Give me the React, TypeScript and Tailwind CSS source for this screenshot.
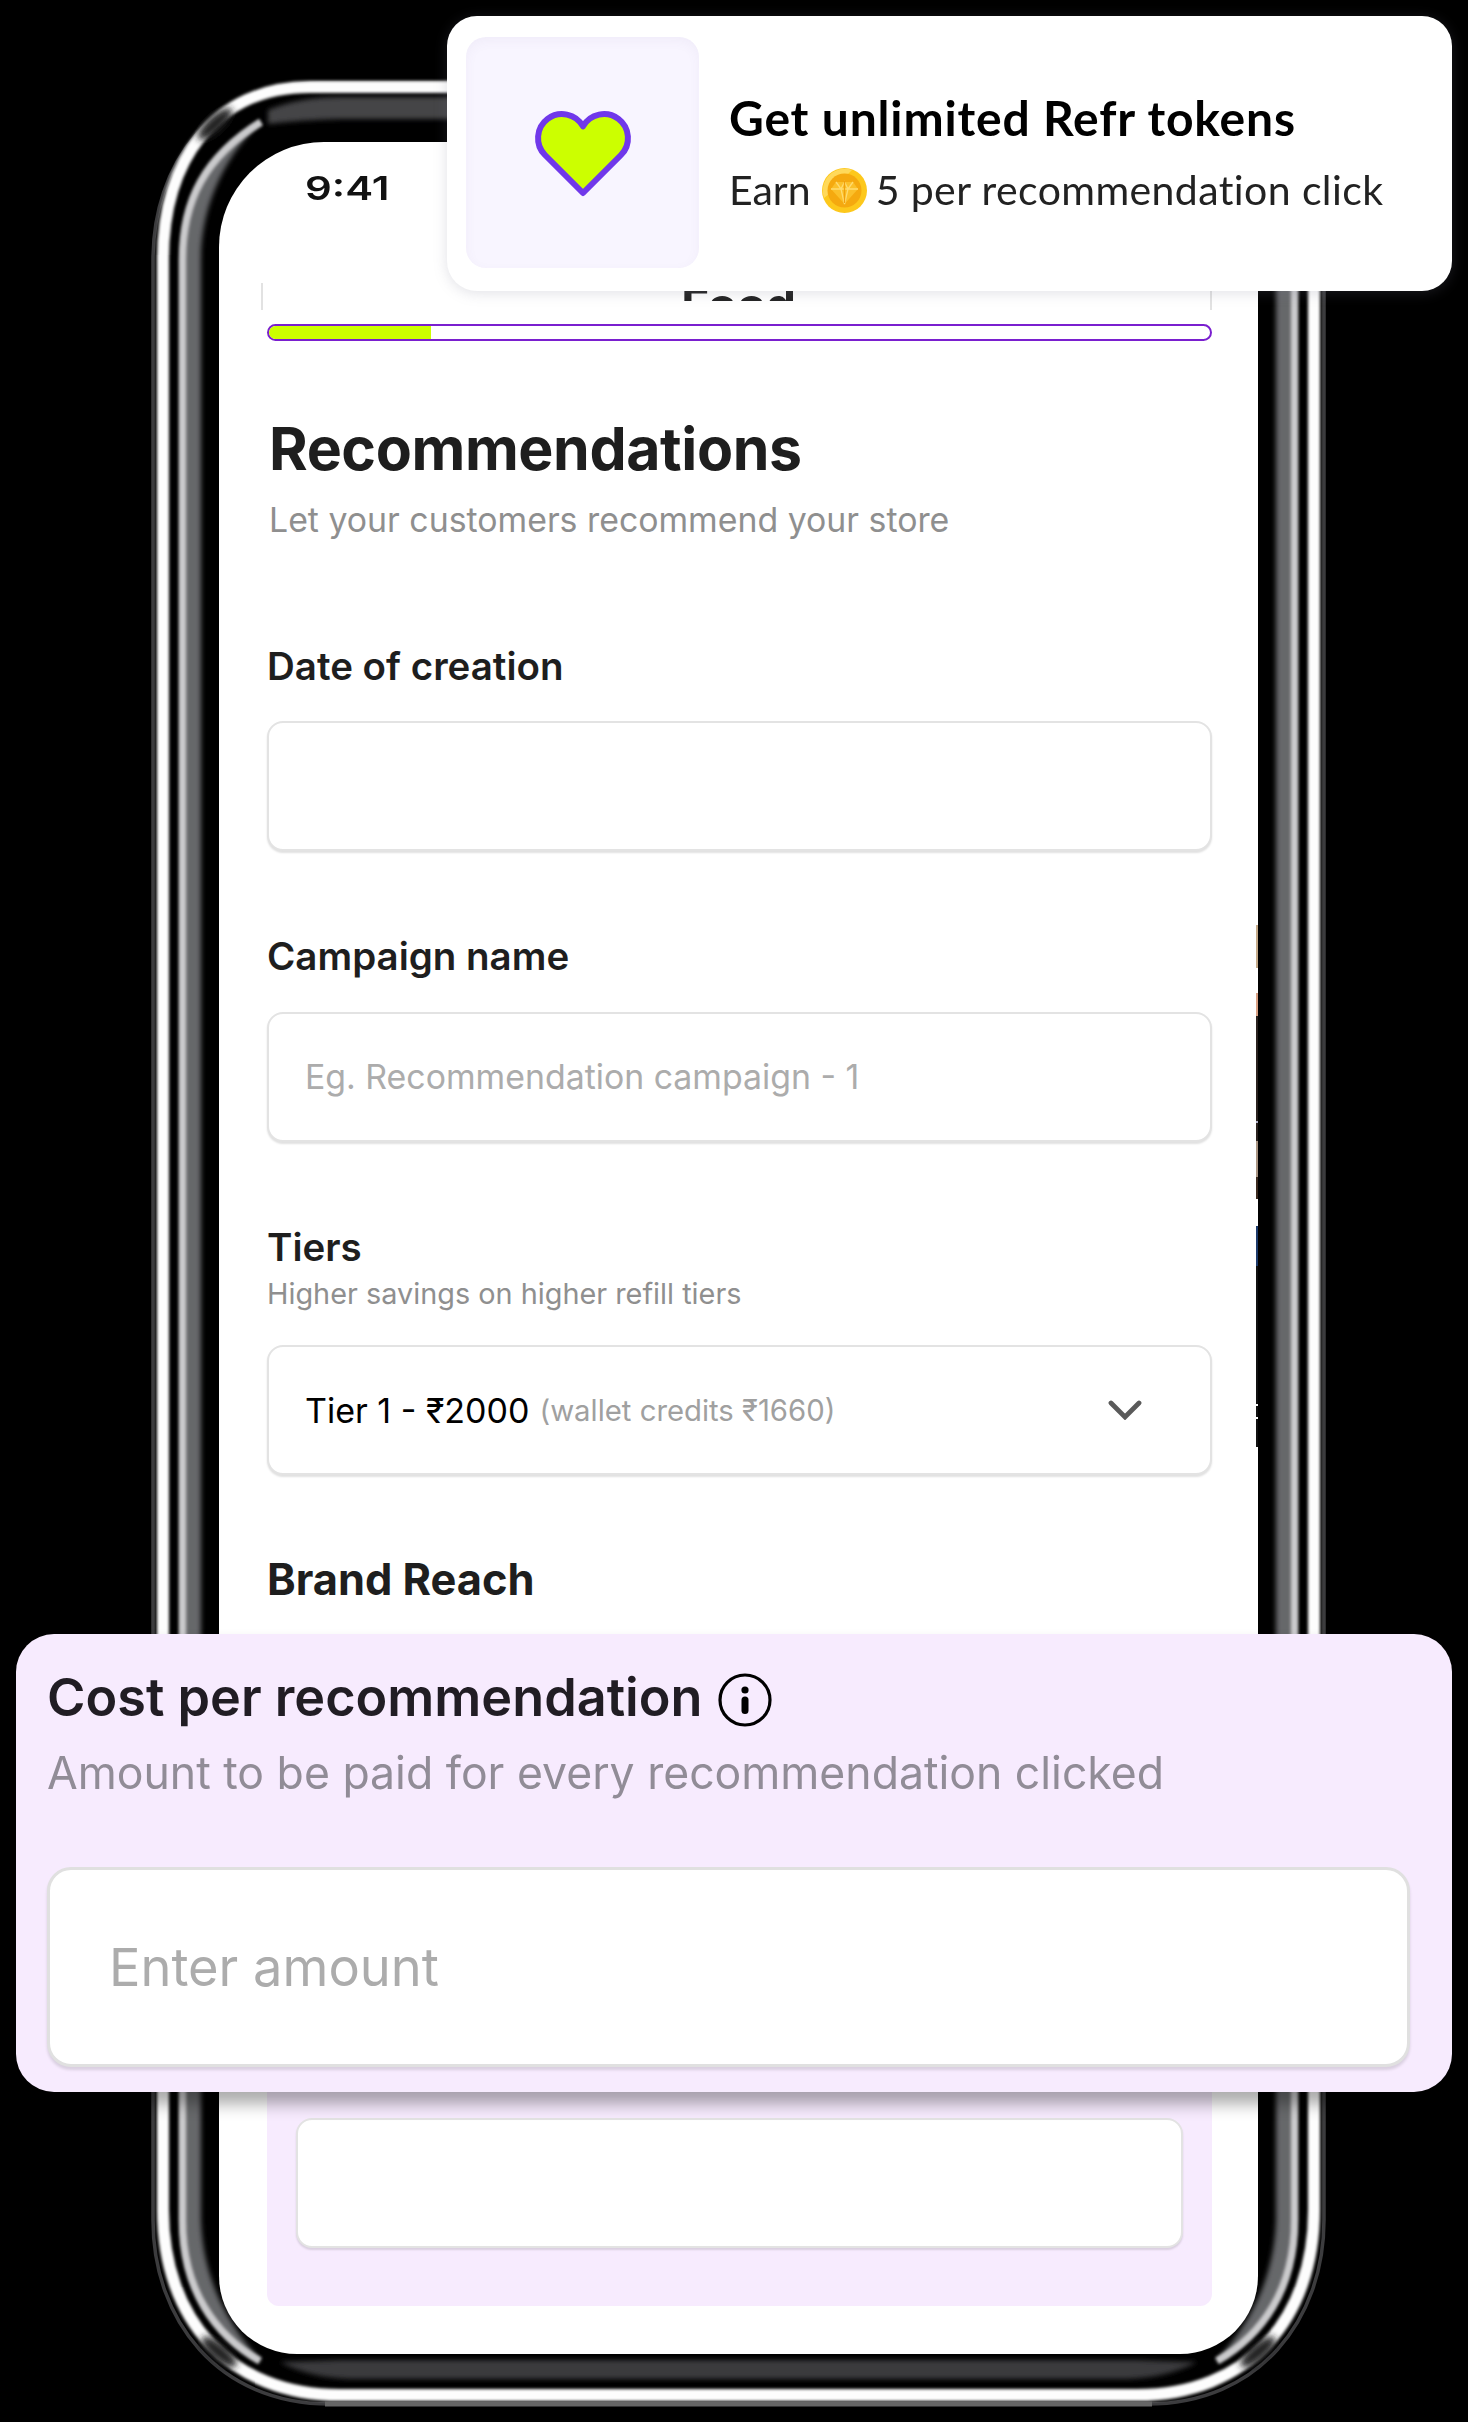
import React from "react";

const INTER = "font-['Inter','Noto_Sans',sans-serif]";

function SideHighlights() {
  return (
    <g>
      <g filter="url(#soft4)">
        <ellipse cx="215" cy="124" rx="22" ry="8" transform="rotate(-42 215 124)" fill="#202022" />
        <ellipse cx="219" cy="2352" rx="22" ry="8" transform="rotate(40 219 2352)" fill="#202022" />
      </g>
      <g filter="url(#soft2)">
        <path d="M182 260 C182 200 205 155 262 121 C230 150 201 200 201 260 V2220 C203 2280 228 2325 262 2362 C215 2335 182 2290 182 2220 Z" fill="#66686a" />
      </g>
      <path d="M261 122 C205 157 182.500 200 182.500 260 V2220 C182.500 2290 215 2335 260 2361" fill="none" stroke="#cacacc" strokeWidth="7.500" filter="url(#soft1)" />
    </g>
  );
}

function PhoneFrame() {
  return (
    <svg className="absolute inset-0" width="1468" height="2422" viewBox="0 0 1468 2422" aria-hidden="true">
      <defs>
        <filter id="soft1" filterUnits="userSpaceOnUse" x="0" y="0" width="1468" height="2422"><feGaussianBlur stdDeviation="1.4" /></filter>
        <filter id="soft2" filterUnits="userSpaceOnUse" x="0" y="0" width="1468" height="2422"><feGaussianBlur stdDeviation="2.4" /></filter>
        <filter id="soft4" filterUnits="userSpaceOnUse" x="0" y="0" width="1468" height="2422"><feGaussianBlur stdDeviation="3.5" /></filter>
      </defs>
      <path d="M320 83 C210 83 153 165 153 260 V2220 C153 2320 218 2404 330 2404 H1147 C1259 2404 1324 2320 1324 2220 V260 C1324 165 1267 83 1157 83 Z" fill="none" stroke="#3c3c3e" strokeWidth="3.500" />
      <path d="M310 87 C215 87 163 160 163 260 V2210 C163 2320 230 2395 340 2395 H1137 C1247 2395 1314 2320 1314 2210 V260 C1314 160 1262 87 1167 87 Z" fill="none" stroke="#fdfdfd" strokeWidth="12" filter="url(#soft1)" />
      <path d="M325 2404 H1152" stroke="#666" strokeWidth="5" />
      <SideHighlights />
      <g transform="translate(1477 0) scale(-1 1)">
        <SideHighlights />
      </g>
      <path d="M268 110 Q300 97 340 97 H1137 Q1177 97 1209 110 V124 Q1177 120 1137 119 H340 Q300 120 268 124 Z" fill="#444446" filter="url(#soft2)" />
      <path d="M280 2362 Q310 2378 350 2379 H1127 Q1167 2378 1197 2362 L1137 2360 H340 Z" fill="#3a3a3c" filter="url(#soft2)" />
    </svg>
  );
}

function Field({ children, className = "" }: { children?: React.ReactNode; className?: string }) {
  return (
    <div className={`flex h-[130px] items-center rounded-[16px] border-2 border-[#e3e3e3] bg-white pr-[68px] pl-[36px] shadow-[0_2px_2px_rgba(0,0,0,0.12)] ${className}`}>
      {children}
    </div>
  );
}

function Label({ children, className = "" }: { children: React.ReactNode; className?: string }) {
  return <div className={`text-[38.5px] leading-[48px] font-semibold whitespace-nowrap text-[#1e1e1e] ${className}`}>{children}</div>;
}

function Coin() {
  return (
    <svg width="45" height="45" viewBox="0 0 45 45" className="shrink-0" aria-hidden="true">
      <circle cx="22.500" cy="22.500" r="22.500" fill="#fdc81c" />
      <path d="M2 30 A22 22 0 0 1 30 2 L24 8 A16 16 0 0 0 7 26 Z" fill="#ffd95a" />
      <circle cx="22.500" cy="22.500" r="17" fill="#f5a90f" />
      <path d="M14 14 H31 L36 21 L22.500 36 L9 21 Z" fill="#fbc02a" />
      <path d="M14 14 L19 21 L22.500 14 L26 21 L31 14 M9 21 H36 M19 21 L22.500 36 L26 21" fill="none" stroke="#ffdb70" strokeWidth="1.300" />
      <path d="M22.500 13 V35" stroke="#f0a00c" strokeWidth="1.300" />
    </svg>
  );
}

function EdgeSliver() {
  return (
    <div className="absolute top-[783px] right-0 flex w-[2px] flex-col">
      <div className="h-[43px] bg-[#c5ab8a]" />
      <div className="h-[25px] bg-white" />
      <div className="h-[23px] bg-[#d9a184]" />
      <div className="h-[105px] bg-[#2a221f]" />
      <div className="h-[2px] bg-[#b0b0c8]" />
      <div className="h-[18px] bg-[#2a221f]" />
      <div className="h-[36px] bg-[#a99583]" />
      <div className="h-[22px] bg-[#3b2a1f]" />
      <div className="h-[27px] bg-white" />
      <div className="h-[40px] bg-[#1c3a6b]" />
      <div className="h-[138px] bg-[#111]" />
      <div className="h-[2px] bg-white" />
      <div className="h-[11px] bg-[#111]" />
      <div className="h-[2px] bg-white" />
      <div className="h-[28px] bg-[#111]" />
    </div>
  );
}

function Screen() {
  return (
    <div className="relative mt-[142px] ml-[219px] flex h-[2212px] w-[1039px] flex-col overflow-hidden rounded-t-[105px] rounded-b-[78px] bg-white px-[48px]">
      <div className="mt-[22px] ml-[38px] h-[48px] w-[70px] origin-left scale-x-[1.27] text-[33px] leading-[48px] font-semibold whitespace-nowrap text-[#111]">9:41</div>
      <div className="-mr-[2px] -ml-[6px] mt-[71px] h-[27px] border-x-2 border-[#e2e2e2]">
        <div className="h-[18px] overflow-hidden">
          <div className="-mt-[9px] scale-x-[1.08] pl-[4px] text-center text-[44px] leading-[60px] font-bold text-[#222]">Food</div>
        </div>
      </div>
      <div className="mt-[14px] h-[17px] w-[945px] shrink-0 overflow-hidden rounded-full border-[2.5px] border-[#7a1fcf]">
        <div className="h-full w-[162px] bg-[#ccff00]" />
      </div>

      <h1 className="mt-[72px] pl-[2px] text-[59px] leading-[72px] font-bold tracking-[-0.4px] whitespace-nowrap text-[#1e1e1e]">Recommendations</h1>
      <p className="mt-[13px] pl-[2px] text-[33.850px] leading-[44px] whitespace-nowrap text-[#8f8f8f]">Let your customers recommend your store</p>

      <div className="w-[945px]">
        <Label className="mt-[100px]">Date of creation</Label>
        <Field className="mt-[31px]" />
        <Label className="mt-[81px]">Campaign name</Label>
        <Field className="mt-[32px]">
          <span className="text-[33.850px] whitespace-nowrap text-[#acacac]">Eg. Recommendation campaign - 1</span>
        </Field>
        <Label className="mt-[81px]">Tiers</Label>
        <p className="mt-[5px] text-[28.850px] leading-[36px] whitespace-nowrap text-[#8f8f8f]">Higher savings on higher refill tiers</p>
        <Field className="mt-[33px] justify-between">
          <div className="flex items-baseline gap-[10px] whitespace-nowrap">
            <span className="text-[34px] text-black">Tier 1 - ₹2000</span>
            <span className="mb-[2px] self-end pb-px text-[29.300px] text-[#a0a0a0]">(wallet credits ₹1660)</span>
          </div>
          <svg width="34" height="20" viewBox="0 0 34 20" className="shrink-0" aria-hidden="true">
            <path d="M3 3 L17 17 L31 3" fill="none" stroke="#5a5a5a" strokeWidth="4.800" strokeLinecap="round" />
          </svg>
        </Field>
        <h2 className="mt-[78px] text-[43.400px] leading-[52px] font-bold whitespace-nowrap text-[#1e1e1e]">Brand Reach</h2>
        <div className="mt-[35px] flex h-[666px] flex-col justify-end rounded-[12px] bg-[#f7ebfe] px-[29px] pb-[58px]">
          <Field />
        </div>
      </div>
      <EdgeSliver />
    </div>
  );
}

function TokenCard() {
  return (
    <div className="absolute top-[16px] left-[447px] flex h-[275px] w-[1005px] items-start rounded-[30px] bg-white pt-[21px] pl-[19px] font-['Lato','Open_Sans',sans-serif] shadow-[0_2px_14px_rgba(120,120,140,0.22)]">
      <div className="flex h-[231px] w-[233px] shrink-0 items-center justify-center rounded-[20px] bg-[#f8f5ff] shadow-[inset_0_4px_12px_rgba(90,70,130,0.05)]">
        <svg width="100" height="90" viewBox="533 108 100 90" aria-hidden="true">
          <path d="M583 193 L545 155 A24 24 0 1 1 583 126.400 A24 24 0 1 1 621 155 Z" fill="#ccff00" stroke="#7038ea" strokeWidth="6" strokeLinejoin="round" />
        </svg>
      </div>
      <div className="pt-[51px] pl-[30px]">
        <div className="text-[48px] leading-[60px] font-bold tracking-[0.83px] whitespace-nowrap text-black">Get unlimited Refr tokens</div>
        <div className="mt-[16px] flex h-[52px] items-center whitespace-nowrap text-[#222]">
          <span className="text-[41px] leading-[52px]">Earn</span>
          <span className="mr-[9px] ml-[11px] flex"><Coin /></span>
          <span className="text-[41px] leading-[52px] tracking-[0.4px]">5 per recommendation click</span>
        </div>
      </div>
    </div>
  );
}

function CostCard() {
  return (
    <div className="absolute top-[1634px] left-[16px] flex h-[458px] w-[1436px] flex-col rounded-[38px] bg-[#f7ebfe] pt-[31px] pr-[42px] pl-[31px] shadow-[0_12px_16px_rgba(0,0,0,0.33)]">
      <div className="flex items-center">
        <div className="text-[52.200px] leading-[64px] font-semibold whitespace-nowrap text-[#211d24]">Cost per recommendation</div>
        <svg width="54" height="54" viewBox="0 0 54 54" className="mt-[6px] ml-[16px] shrink-0" aria-hidden="true">
          <circle cx="27" cy="27" r="25" fill="none" stroke="#000" strokeWidth="3.200" />
          <circle cx="27" cy="17" r="3.600" fill="#000" />
          <path d="M27 27 V37.500" stroke="#000" strokeWidth="7" strokeLinecap="round" />
        </svg>
      </div>
      <p className="mt-[18px] text-[44.550px] leading-[52px] whitespace-nowrap text-[#918c97]">Amount to be paid for every recommendation clicked</p>
      <div className="mt-[68px] flex h-[200px] items-center rounded-[24px] border-[3px] border-[#e0e0e0] bg-white pl-[59px] shadow-[0_3px_3px_rgba(0,0,0,0.12)]">
        <span className="text-[52.400px] leading-[64px] text-[#acacac]">Enter amount</span>
      </div>
    </div>
  );
}

export default function App() {
  return (
    <div className={`relative flex h-[2422px] w-[1468px] items-start overflow-hidden bg-black ${INTER}`}>
      <PhoneFrame />
      <Screen />
      <TokenCard />
      <CostCard />
    </div>
  );
}
